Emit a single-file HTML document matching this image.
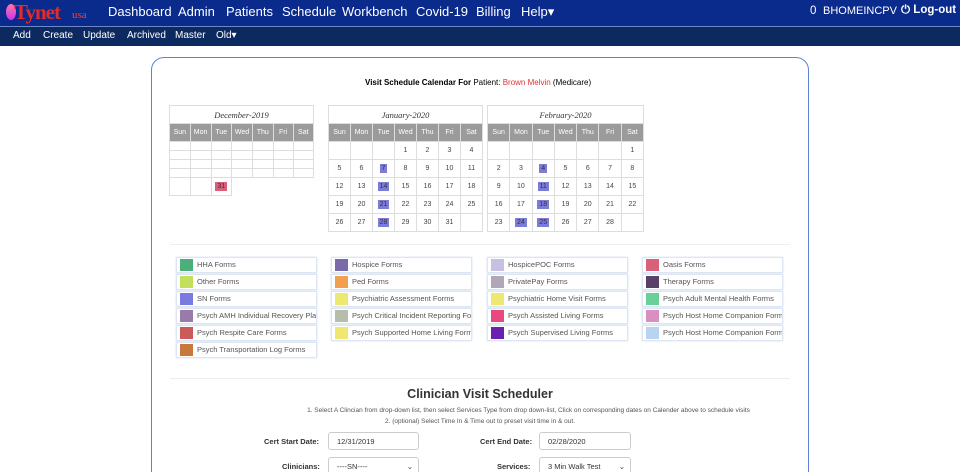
<!DOCTYPE html>
<html><head><meta charset="utf-8">
<style>
*{box-sizing:border-box;margin:0;padding:0}
html,body{width:960px;height:472px;overflow:hidden}
body{background:#fff;font-family:"Liberation Sans",sans-serif;position:relative}
.top{position:absolute;left:0;top:0;width:960px;height:27px;background:#0a2a8c;border-bottom:1px solid #6d86c8}
.top .m{position:absolute;top:4px;color:#fff;font-size:13px}
.sub{position:absolute;left:0;top:27px;width:960px;height:19px;background:#0d2a60}
.sub span{position:absolute;top:3px;color:#fff;font-size:10px}
.card{position:absolute;left:151px;top:57px;width:658px;height:430px;border:1.5px solid #5f82d8;border-radius:13px;background:#fff}
.t{position:absolute;font-size:8px;color:#000}
table.cal{position:absolute;border-collapse:collapse;font-size:7px;color:#444}
table.cal td{border:1px solid #ddd;height:18px;text-align:center;width:22px}
table.cal th.h{height:18px;border:1px solid #ddd;font-family:"Liberation Serif",serif;font-style:italic;font-weight:normal;font-size:8.5px;color:#333}
table.cal tr.d td{background:#9b9b9b;color:#fff}
table.dec td{height:9px}
table.dec tr.d td{height:18px}
table.dec tr.l td{height:18px}
.b{display:inline-block;padding:1px 2px;background:#7b7bd8;color:#333}
.r{display:inline-block;padding:1px 2px;background:#d9607a;color:#333}
.f{position:absolute;width:141px;height:16px;border:1px solid #dde6f2;box-shadow:0 0 2px #cfe0f5;font-size:7.5px;color:#555;white-space:nowrap;overflow:hidden;line-height:14px;padding-left:20px}
.f i{position:absolute;left:3px;top:1px;width:13px;height:12px}
.hr{position:absolute;left:170px;top:378px;width:620px;height:1px;background:#eee}
.lbl{position:absolute;font-size:7.5px;font-weight:bold;color:#333}
.in{position:absolute;height:18px;border:1px solid #ccc;border-radius:3px;font-size:7.5px;color:#333;padding:4px 8px}
</style></head><body>
<div class="top">
<div style="position:absolute;left:6px;top:4px;width:10px;height:16px;background:linear-gradient(#f7a,#c3e);border-radius:50%"></div>
<div style="position:absolute;left:14px;top:0px;color:#e62a2a;font-size:21px;font-weight:bold;font-family:'Liberation Serif',serif;letter-spacing:-1px">Tynet</div>
<div style="position:absolute;left:72px;top:9px;color:#e43;font-size:11px;font-family:'Liberation Serif',serif">usa</div>
<span class="m" style="left:108px">Dashboard</span><span class="m" style="left:178px">Admin</span><span class="m" style="left:226px">Patients</span><span class="m" style="left:282px">Schedule</span><span class="m" style="left:342px">Workbench</span><span class="m" style="left:416px">Covid-19</span><span class="m" style="left:476px">Billing</span><span class="m" style="left:521px">Help▾</span>
<span class="m" style="left:810px;font-size:11.5px;top:5px">0</span><span class="m" style="left:823px;font-size:11px;top:5px">BHOMEINCPV</span><span class="m" style="left:901px;font-weight:bold;font-size:11.5px;top:4px">⏻ Log-out</span>
</div>
<div class="sub"><span style="left:13px">Add</span><span style="left:43px">Create</span><span style="left:83px">Update</span><span style="left:127px">Archived</span><span style="left:175px">Master</span><span style="left:216px">Old▾</span></div>
<div class="card"></div>
<div class="t" style="left:365px;top:78px"><b>Visit Schedule Calendar For</b> Patient: <span style="color:#d33">Brown Melvin</span> (Medicare)</div>

<table class="cal dec" style="left:169px;top:105px;width:145px">
<tr><th class="h" colspan="7">December-2019</th></tr>
<tr class="d"><td>Sun</td><td>Mon</td><td>Tue</td><td>Wed</td><td>Thu</td><td>Fri</td><td>Sat</td></tr>
<tr><td></td><td></td><td></td><td></td><td></td><td></td><td></td></tr>
<tr><td></td><td></td><td></td><td></td><td></td><td></td><td></td></tr>
<tr><td></td><td></td><td></td><td></td><td></td><td></td><td></td></tr>
<tr><td></td><td></td><td></td><td></td><td></td><td></td><td></td></tr>
<tr class="l"><td></td><td></td><td><span class="r">31</span></td><td colspan="4" style="border:none"></td></tr>
</table>

<table class="cal" style="left:328px;top:105px;width:155px">
<tr><th class="h" colspan="7">January-2020</th></tr>
<tr class="d"><td>Sun</td><td>Mon</td><td>Tue</td><td>Wed</td><td>Thu</td><td>Fri</td><td>Sat</td></tr>
<tr><td></td><td></td><td></td><td>1</td><td>2</td><td>3</td><td>4</td></tr>
<tr><td>5</td><td>6</td><td><span class="b">7</span></td><td>8</td><td>9</td><td>10</td><td>11</td></tr>
<tr><td>12</td><td>13</td><td><span class="b">14</span></td><td>15</td><td>16</td><td>17</td><td>18</td></tr>
<tr><td>19</td><td>20</td><td><span class="b">21</span></td><td>22</td><td>23</td><td>24</td><td>25</td></tr>
<tr><td>26</td><td>27</td><td><span class="b">28</span></td><td>29</td><td>30</td><td>31</td><td></td></tr>
</table>

<table class="cal" style="left:487px;top:105px;width:157px">
<tr><th class="h" colspan="7">February-2020</th></tr>
<tr class="d"><td>Sun</td><td>Mon</td><td>Tue</td><td>Wed</td><td>Thu</td><td>Fri</td><td>Sat</td></tr>
<tr><td></td><td></td><td></td><td></td><td></td><td></td><td>1</td></tr>
<tr><td>2</td><td>3</td><td><span class="b">4</span></td><td>5</td><td>6</td><td>7</td><td>8</td></tr>
<tr><td>9</td><td>10</td><td><span class="b">11</span></td><td>12</td><td>13</td><td>14</td><td>15</td></tr>
<tr><td>16</td><td>17</td><td><span class="b">18</span></td><td>19</td><td>20</td><td>21</td><td>22</td></tr>
<tr><td>23</td><td><span class="b">24</span></td><td><span class="b">25</span></td><td>26</td><td>27</td><td>28</td><td></td></tr>
</table>
<div style="position:absolute;left:170px;top:244px;width:620px;height:1px;background:#eee"></div>

<div class="f" style="left:176px;top:257px"><i style="background:#4caf7a"></i>HHA Forms</div>
<div class="f" style="left:176px;top:274px"><i style="background:#c2e05a"></i>Other Forms</div>
<div class="f" style="left:176px;top:291px"><i style="background:#7a7ae0"></i>SN Forms</div>
<div class="f" style="left:176px;top:308px"><i style="background:#9a7aaa"></i>Psych AMH Individual Recovery Plan</div>
<div class="f" style="left:176px;top:325px"><i style="background:#cc5a5a"></i>Psych Respite Care Forms</div>
<div class="f" style="left:176px;top:342px"><i style="background:#c8783a"></i>Psych Transportation Log Forms</div>
<div class="f" style="left:331px;top:257px"><i style="background:#7a6aaa"></i>Hospice Forms</div>
<div class="f" style="left:331px;top:274px"><i style="background:#f2a050"></i>Ped Forms</div>
<div class="f" style="left:331px;top:291px"><i style="background:#eee870"></i>Psychiatric Assessment Forms</div>
<div class="f" style="left:331px;top:308px"><i style="background:#b8bcaa"></i>Psych Critical Incident Reporting Forms</div>
<div class="f" style="left:331px;top:325px"><i style="background:#eee870"></i>Psych Supported Home Living Forms</div>
<div class="f" style="left:487px;top:257px"><i style="background:#c8c0e0"></i>HospicePOC Forms</div>
<div class="f" style="left:487px;top:274px"><i style="background:#b0a8b8"></i>PrivatePay Forms</div>
<div class="f" style="left:487px;top:291px"><i style="background:#eee870"></i>Psychiatric Home Visit Forms</div>
<div class="f" style="left:487px;top:308px"><i style="background:#e84a80"></i>Psych Assisted Living Forms</div>
<div class="f" style="left:487px;top:325px"><i style="background:#6a20b0"></i>Psych Supervised Living Forms</div>
<div class="f" style="left:642px;top:257px"><i style="background:#d9607a"></i>Oasis Forms</div>
<div class="f" style="left:642px;top:274px"><i style="background:#5a4068"></i>Therapy Forms</div>
<div class="f" style="left:642px;top:291px"><i style="background:#6ad09a"></i>Psych Adult Mental Health Forms</div>
<div class="f" style="left:642px;top:308px"><i style="background:#d890c0"></i>Psych Host Home Companion Forms</div>
<div class="f" style="left:642px;top:325px"><i style="background:#b8d4f0"></i>Psych Host Home Companion Forms</div>

<div class="hr"></div>
<div style="position:absolute;left:0;width:960px;top:387px;text-align:center;font-size:12.5px;font-weight:bold;color:#333">Clinician Visit Scheduler</div>
<div style="position:absolute;left:0;width:1057px;top:407px;text-align:center;font-size:6.5px;color:#555">1. Select A Clincian from drop-down list, then select Services Type from drop down-list, Click on corresponding dates on Calender above to schedule visits</div>
<div style="position:absolute;left:0;width:960px;top:418px;text-align:center;font-size:6.5px;color:#555">2. (optional) Select Time In &amp; Time out to preset visit time in &amp; out.</div>
<div class="lbl" style="left:264px;top:437px">Cert Start Date:</div>
<div class="in" style="left:328px;top:432px;width:91px">12/31/2019</div>
<div class="lbl" style="left:480px;top:437px">Cert End Date:</div>
<div class="in" style="left:539px;top:432px;width:92px">02/28/2020</div>
<div class="lbl" style="left:282px;top:462px">Clinicians:</div>
<div class="in" style="left:328px;top:457px;width:91px">----SN----<span style="position:absolute;right:5px">⌄</span></div>
<div class="lbl" style="left:497px;top:462px">Services:</div>
<div class="in" style="left:539px;top:457px;width:92px">3 Min Walk Test<span style="position:absolute;right:5px">⌄</span></div>
</body></html>
